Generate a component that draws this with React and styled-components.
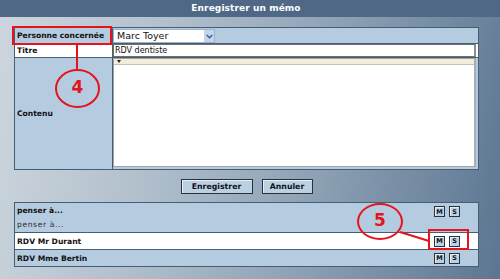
import React from "react";
import styled, { createGlobalStyle } from "styled-components";

const GlobalStyle = createGlobalStyle`
  html, body {
    margin: 0;
    padding: 0;
    background: #5c7691;
  }
  * {
    box-sizing: border-box;
  }
`;

const RED = "#e3141e";
const BORDER = "#465d76";
const ROW_BLUE = "#b5cbe0";
const FONT = `"DejaVu Sans", Verdana, sans-serif`;

const Page = styled.div`
  position: relative;
  width: 500px;
  height: 279px;
  overflow: hidden;
  font-family: ${FONT};
  color: #111;
  background: linear-gradient(100deg, #cdd6de 0%, #b3c1cd 30%, #8fa2b5 62%, #5c7691 100%);
`;

const TitleBar = styled.div`
  height: 17px;
  line-height: 16px;
  padding-right: 8px;
  text-align: center;
  background: #4e6886;
  color: #fff;
  font-size: 9px;
  font-weight: bold;
  letter-spacing: 0.1px;
`;

const Content = styled.div`
  display: flex;
  flex-direction: column;
  padding: 10px 21px 0 14px;
`;

const FormTable = styled.div`
  display: grid;
  grid-template-columns: 97px 1fr;
  grid-template-rows: 15px 13px 111px;
  gap: 1px;
  padding: 1px;
  background: ${BORDER};
`;

const Label = styled.div`
  display: flex;
  align-items: center;
  padding-left: 2px;
  font-size: 7.6px;
  font-weight: bold;
  background: ${(p) => (p.$white ? "#fff" : ROW_BLUE)};
`;

const Cell = styled.div`
  display: flex;
  flex-direction: column;
  align-items: flex-start;
  background: ${(p) => (p.$white ? "#fff" : ROW_BLUE)};
`;

const Select = styled.div`
  display: flex;
  align-items: center;
  width: 102px;
  height: 14px;
  margin-top: 1px;
  background: #fff;
  border: 1px solid #9fb3c8;
  font-family: ${FONT};
  font-size: 9.5px;
`;

const SelectText = styled.span`
  flex: 1;
  padding-left: 3px;
  line-height: 12px;
`;

const SelectArrow = styled.span`
  display: flex;
  align-items: center;
  justify-content: center;
  width: 11px;
  height: 12px;
  background: #c3d4ec;
  border-left: 1px solid #fff;
`;

const TextInput = styled.div`
  width: calc(100% - 2px);
  height: 13px;
  padding-left: 1px;
  border: 1px solid #6f6f6f;
  border-right: 2px solid #8c8c8c;
  background: #fff;
  font-family: ${FONT};
  font-size: 8px;
  line-height: 11px;
`;

const Editor = styled.div`
  display: flex;
  flex-direction: column;
  width: calc(100% - 2px);
  height: 109px;
  border: 1px solid #a2a2a2;
  border-right: 2px solid #a8adb3;
  background: #fff;
`;

const EditorToolbar = styled.div`
  display: flex;
  align-items: center;
  height: 6px;
  padding-left: 3px;
  background: #f0eddb;
  border-bottom: 1px solid #c4c1b0;
`;

const Caret = styled.span`
  width: 0;
  height: 0;
  border-left: 2.5px solid transparent;
  border-right: 2.5px solid transparent;
  border-top: 3px solid #222;
`;

const ButtonRow = styled.div`
  display: flex;
  justify-content: center;
  gap: 9px;
  margin-top: 9px;
`;

const Button = styled.button`
  width: ${(p) => p.$w}px;
  height: 15px;
  padding: 0;
  font-family: ${FONT};
  font-size: 7.8px;
  font-weight: bold;
  color: #111;
  background: #bcd0e3;
  border: 1px solid #26333f;
  box-shadow: inset 1px 1px 0 #e6eef6;
`;

const List = styled.div`
  display: flex;
  flex-direction: column;
  gap: 1px;
  margin-top: 8px;
  padding: 1px;
  background: ${BORDER};
`;

const Item = styled.div`
  display: flex;
  flex-direction: column;
  background: ${(p) => (p.$white ? "#fff" : ROW_BLUE)};
`;

const ItemHead = styled.div`
  display: flex;
  align-items: center;
  height: ${(p) => p.$h}px;
  padding: 0 18px 0 2px;
`;

const ItemTitle = styled.span`
  flex: 1;
  font-size: 7.6px;
  font-weight: bold;
`;

const ItemDesc = styled.div`
  height: 14px;
  padding-left: 2px;
  font-size: 7.6px;
  letter-spacing: 0.6px;
  line-height: 13px;
  color: #2e2e2e;
`;

const Actions = styled.div`
  display: flex;
  gap: 4px;
  margin-top: ${(p) => p.$offset || 0}px;
`;

const SmallButton = styled.span`
  display: flex;
  align-items: center;
  justify-content: center;
  width: 11px;
  height: 11px;
  font-size: 6.5px;
  font-weight: bold;
  background: #bcd0e3;
  border: 1px solid #26333f;
  box-shadow: inset 1px 1px 0 #e6eef6;
`;

const CalloutBox = styled.div`
  position: absolute;
  left: ${(p) => p.$x}px;
  top: ${(p) => p.$y}px;
  width: ${(p) => p.$w}px;
  height: ${(p) => p.$h}px;
  border: 2px solid ${RED};
`;

const Bubble = styled.div`
  position: absolute;
  left: ${(p) => p.$x}px;
  top: ${(p) => p.$y}px;
  width: ${(p) => p.$w}px;
  height: ${(p) => p.$h}px;
  display: flex;
  align-items: center;
  justify-content: center;
  padding-bottom: 3px;
  border: 2px solid ${RED};
  border-radius: 50%;
  color: ${RED};
  font-size: 17px;
  font-weight: bold;
`;

const Leaders = styled.svg`
  position: absolute;
  left: 0;
  top: 0;
  pointer-events: none;
`;

const entries = [
  { title: "penser à...", desc: "penser à...", offset: 2 },
  { title: "RDV Mr Durant", white: true },
  { title: "RDV Mme Bertin" },
];

const App = () => {
  return (
    <>
      <GlobalStyle />
      <Page>
        <TitleBar>Enregistrer un mémo</TitleBar>
        <Content>
          <FormTable>
            <Label>Personne concernée</Label>
            <Cell>
              <Select>
                <SelectText>Marc Toyer</SelectText>
                <SelectArrow>
                  <svg width="7" height="5" viewBox="0 0 7 5">
                    <polyline points="0.8,1 3.5,3.8 6.2,1" fill="none" stroke="#3b5c99" strokeWidth="1.4" />
                  </svg>
                </SelectArrow>
              </Select>
            </Cell>
            <Label $white>Titre</Label>
            <Cell $white>
              <TextInput>RDV dentiste</TextInput>
            </Cell>
            <Label>Contenu</Label>
            <Cell>
              <Editor>
                <EditorToolbar>
                  <Caret />
                </EditorToolbar>
              </Editor>
            </Cell>
          </FormTable>

          <ButtonRow>
            <Button $w={72}>Enregistrer</Button>
            <Button $w={51}>Annuler</Button>
          </ButtonRow>

          <List>
            {entries.map((e) => (
              <Item key={e.title} $white={e.white}>
                <ItemHead $h={e.desc ? 15 : 16}>
                  <ItemTitle>{e.title}</ItemTitle>
                  <Actions $offset={e.offset}>
                    <SmallButton>M</SmallButton>
                    <SmallButton>S</SmallButton>
                  </Actions>
                </ItemHead>
                {e.desc && <ItemDesc>{e.desc}</ItemDesc>}
              </Item>
            ))}
          </List>
        </Content>

        <CalloutBox $x={12} $y={26} $w={100} $h={19} />
        <Bubble $x={55} $y={69} $w={45} $h={39}>4</Bubble>
        <CalloutBox $x={428} $y={229} $w={41} $h={21} />
        <Bubble $x={357} $y={203} $w={46} $h={37}>5</Bubble>
        <Leaders width="500" height="279">
          <line x1="77" y1="45" x2="77" y2="70" stroke={RED} strokeWidth="2" />
          <line x1="400" y1="232" x2="429" y2="241" stroke={RED} strokeWidth="2" />
        </Leaders>
      </Page>
    </>
  );
};

export default App;
